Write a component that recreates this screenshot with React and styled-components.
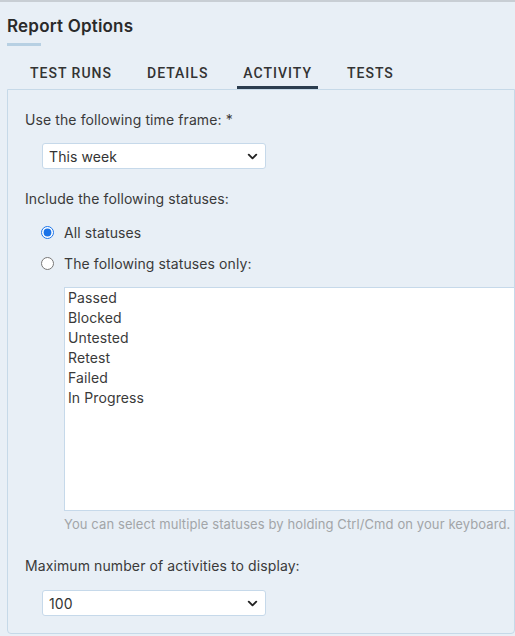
import React, { useState } from "react";
import styled, { createGlobalStyle } from "styled-components";
import { ChevronDown } from "lucide-react";

const GlobalStyle = createGlobalStyle`
  html, body {
    margin: 0;
    padding: 0;
    background: #e8eff6;
    overflow: hidden;
  }
  * {
    box-sizing: border-box;
  }
`;

const tabs = ["Test Runs", "Details", "Activity", "Tests"];
const statuses = ["Passed", "Blocked", "Untested", "Retest", "Failed", "In Progress"];

export default function App() {
  const [active, setActive] = useState("Activity");
  const [mode, setMode] = useState("all");

  return (
    <Page>
      <GlobalStyle />
      <Title>Report Options</Title>
      <TitleBar />
      <Tabs>
        {tabs.map((t) => (
          <Tab key={t} $active={t === active} onClick={() => setActive(t)}>
            {t}
          </Tab>
        ))}
      </Tabs>
      <Panel>
        <Label>Use the following time frame: *</Label>
        <Select $top={13}>
          <span>This week</span>
          <ChevronDown size={15} strokeWidth={3} color="#222" />
        </Select>

        <Label $top={20}>Include the following statuses:</Label>
        <Radios>
          <RadioRow>
            <Radio
              type="radio"
              name="mode"
              checked={mode === "all"}
              onChange={() => setMode("all")}
            />
            All statuses
          </RadioRow>
          <RadioRow>
            <Radio
              type="radio"
              name="mode"
              checked={mode === "only"}
              onChange={() => setMode("only")}
            />
            The following statuses only:
          </RadioRow>
        </Radios>

        <ListBox>
          {statuses.map((s) => (
            <Option key={s}>{s}</Option>
          ))}
        </ListBox>
        <Help>You can select multiple statuses by holding Ctrl/Cmd on your keyboard.</Help>

        <Label $top={24}>Maximum number of activities to display:</Label>
        <Select $top={14}>
          <span>100</span>
          <ChevronDown size={15} strokeWidth={3} color="#222" />
        </Select>
      </Panel>
    </Page>
  );
}

const Page = styled.div`
  height: 636px;
  width: 515px;
  border-top: 2px solid #c8ced4;
  padding-left: 7px;
  background: #e8eff6;
  font-family: Inter, Roboto, "Liberation Sans", sans-serif;
  letter-spacing: 0.1px;
  color: #3a3a3a;
`;

const Title = styled.h1`
  margin: 12px 0 0;
  font-size: 17px;
  line-height: 24px;
  font-weight: 600;
  letter-spacing: 0.2px;
  color: #2a2a2a;
`;

const TitleBar = styled.div`
  margin-top: 5px;
  width: 34px;
  height: 3px;
  background: #b7d0e3;
`;

const Tabs = styled.div`
  display: flex;
  gap: 23px;
  margin: 18px 0 0 17px;
`;

const Tab = styled.div`
  padding: 0 6px 4px;
  line-height: 18px;
  font-family: Roboto, "Liberation Sans", sans-serif;
  font-size: 14px;
  font-weight: 500;
  letter-spacing: 1px;
  text-transform: uppercase;
  color: #333;
  cursor: pointer;
  border-bottom: 3px solid ${(p) => (p.$active ? "#2b3d4f" : "transparent")};
`;

const Panel = styled.div`
  display: flex;
  flex-direction: column;
  align-items: flex-start;
  border: 1px solid #c6d9e8;
  border-radius: 0 0 4px 4px;
  padding: 20px 0 17px 17px;
`;

const Label = styled.div`
  margin-top: ${(p) => p.$top || 0}px;
  font-size: 14px;
  line-height: 20px;
  color: #3a3a3a;
`;

const Select = styled.div`
  margin: ${(p) => p.$top}px 0 0 17px;
  width: 224px;
  height: 26px;
  display: flex;
  align-items: center;
  justify-content: space-between;
  padding: 0 5px 0 6px;
  background: #fff;
  border: 1px solid #c6d9ea;
  border-radius: 3px;
  font-size: 14px;
  color: #333;
`;

const Radios = styled.div`
  display: flex;
  flex-direction: column;
  gap: 11px;
  margin: 13px 0 0 16px;
`;

const RadioRow = styled.label`
  display: flex;
  align-items: center;
  gap: 10px;
  height: 20px;
  font-size: 14px;
  color: #3a3a3a;
  cursor: pointer;
`;

const Radio = styled.input`
  margin: 0;
  width: 13px;
  height: 13px;
  accent-color: #1a73e8;
`;

const ListBox = styled.div`
  align-self: stretch;
  margin: 14px -1px 0 39px;
  height: 224px;
  background: #fff;
  border: 1px solid #c6d9ea;
  padding: 0 3px;
`;

const Option = styled.div`
  font-size: 14px;
  line-height: 20px;
  color: #3a3a3a;
`;

const Help = styled.div`
  margin: 5px 0 0 39px;
  font-size: 13px;
  line-height: 16px;
  color: #a2a5a8;
  white-space: nowrap;
`;
